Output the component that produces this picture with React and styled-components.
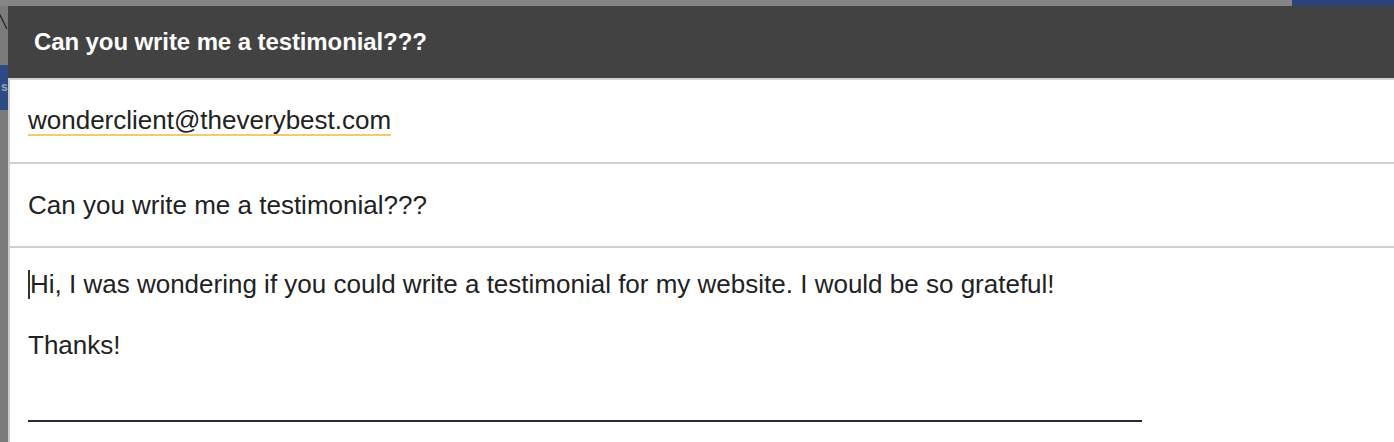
import React from 'react';
import styled, { createGlobalStyle } from 'styled-components';

const GlobalStyle = createGlobalStyle`
  html, body {
    margin: 0;
    padding: 0;
  }
  body {
    font-family: "Liberation Sans", Arial, Helvetica, sans-serif;
    background: #7f7f7f;
    overflow: hidden;
  }
`;

const App = () => (
  <>
    <GlobalStyle />
    <Backdrop>
      <TopStrip>
        <BlueTab />
      </TopStrip>
      <SideStrip>
        <Slash width="8" height="20" viewBox="0 0 8 20">
          <path d="M-1 3 L7 19" stroke="#1e1e1e" strokeWidth="1.2" fill="none" />
        </Slash>
        <SideTab>s</SideTab>
      </SideStrip>
      <ComposeWindow>
        <Header>
          <Title>Can you write me a testimonial???</Title>
        </Header>
        <Pane>
          <Field>
            <Recipient>wonderclient@theverybest.com</Recipient>
          </Field>
          <Field>Can you write me a testimonial???</Field>
          <Body>
            <Paragraph>
              <Caret />
              Hi, I was wondering if you could write a testimonial for my website. I would be so grateful!
            </Paragraph>
            <Paragraph>Thanks!</Paragraph>
            <Signature />
          </Body>
        </Pane>
      </ComposeWindow>
    </Backdrop>
  </>
);

export default App;

const Backdrop = styled.div`
  display: grid;
  grid-template-columns: 8px 1fr;
  grid-template-rows: 6px 1fr;
  height: 100vh;
  overflow: hidden;
`;

const TopStrip = styled.div`
  grid-column: 1 / -1;
  display: flex;
  justify-content: flex-end;
  background: #858585;
`;

const BlueTab = styled.div`
  width: 102px;
  background: #2b4478;
`;

const SideStrip = styled.div`
  display: flex;
  flex-direction: column;
  overflow: hidden;
  background: #7b7b7b;
`;

const Slash = styled.svg`
  display: block;
  margin-top: 4px;
`;

const SideTab = styled.div`
  margin-top: 35px;
  height: 45px;
  background: #2d4a85;
  color: #9aa4b8;
  font-size: 12px;
  font-weight: 700;
  line-height: 45px;
  padding-left: 1px;
`;

const ComposeWindow = styled.div`
  display: flex;
  flex-direction: column;
  min-width: 0;
  background: #fff;
`;

const Header = styled.div`
  height: 72px;
  display: flex;
  align-items: center;
  padding-left: 26px;
  background: #424242;
  border-bottom: 2px solid #d3d3d3;
`;

const Title = styled.h1`
  margin: 0;
  color: #fdfdfd;
  font-size: 24px;
  font-weight: 700;
  letter-spacing: -0.1px;
`;

const Pane = styled.div`
  flex: 1;
  border-left: 2px solid #cdcdcd;
  color: #222;
`;

const Field = styled.div`
  height: 82px;
  display: flex;
  align-items: center;
  padding-left: 18px;
  border-bottom: 2px solid #cfcfcf;
  font-size: 26px;
  line-height: 28px;
`;

const Recipient = styled.span`
  display: inline-block;
  border-bottom: 2px solid #f0cd69;
`;

const Body = styled.div`
  padding: 21px 0 0 18px;
  font-size: 26px;
  line-height: 30.5px;
`;

const Paragraph = styled.p`
  margin: 0 0 30.5px;
  white-space: nowrap;

  &:last-of-type {
    margin-bottom: 0;
  }
`;

const Caret = styled.span`
  display: inline-block;
  width: 2px;
  height: 29px;
  background: #333;
  vertical-align: -6px;
`;

const Signature = styled.div`
  width: 1114px;
  margin-top: 59.5px;
  border-top: 2px solid #252b3c;
`;
